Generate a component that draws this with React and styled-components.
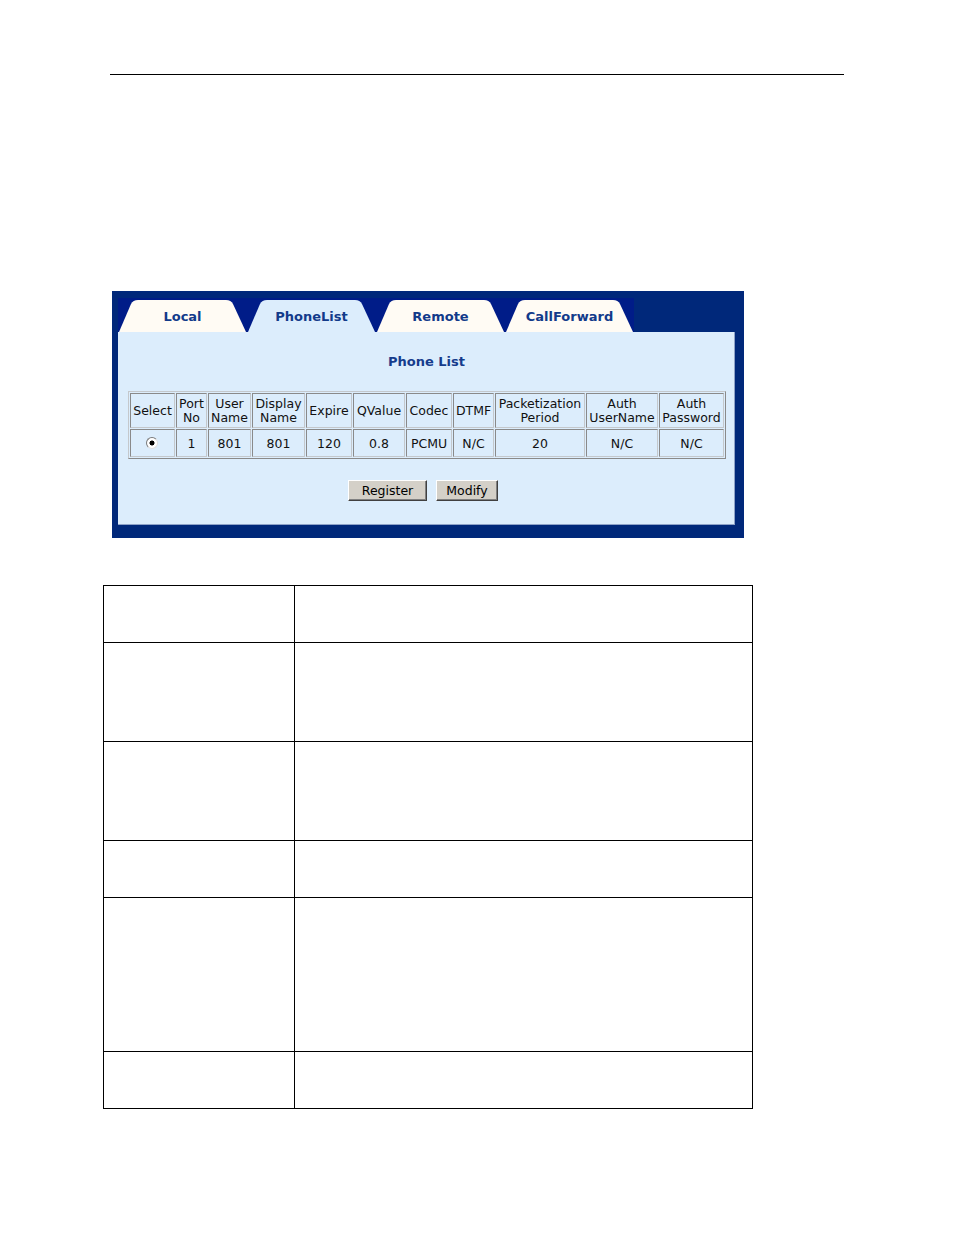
import React from "react";
import styled, { createGlobalStyle } from "styled-components";

const GlobalStyle = createGlobalStyle`
  body {
    margin: 0;
    background: #ffffff;
    font-family: "DejaVu Sans", Verdana, sans-serif;
  }
`;

const tabs = ["Local", "PhoneList", "Remote", "CallForward"];
const active = "PhoneList";

const headers = [
  ["Select"],
  ["Port", "No"],
  ["User", "Name"],
  ["Display", "Name"],
  ["Expire"],
  ["QValue"],
  ["Codec"],
  ["DTMF"],
  ["Packetization", "Period"],
  ["Auth", "UserName"],
  ["Auth", "Password"],
];
const widths = [45, 31, 43, 53, 46, 52, 46, 41, 90, 72, 65];
const row = [null, "1", "801", "801", "120", "0.8", "PCMU", "N/C", "20", "N/C", "N/C"];

const docRows = [57, 99, 99, 57, 154, 57];

const App = () => {
  return (
    <>
      <GlobalStyle />
      <Page>
        <Rule />
        <Frame>
          <TabStrip>
            {tabs.map((t) => (
              <Tab key={t} $active={t === active}>
                {t}
              </Tab>
            ))}
          </TabStrip>
          <Panel>
            <Title>Phone List</Title>
            <ListTable>
              <colgroup>
                {widths.map((w, i) => (
                  <col key={i} style={{ width: w }} />
                ))}
              </colgroup>
              <thead>
                <tr>
                  {headers.map((h, i) => (
                    <HeadCell key={i}>
                      {h.map((line, j) => (
                        <div key={j}>{line}</div>
                      ))}
                    </HeadCell>
                  ))}
                </tr>
              </thead>
              <tbody>
                <tr>
                  {row.map((v, i) => (
                    <Cell key={i}>{v === null ? <Radio /> : v}</Cell>
                  ))}
                </tr>
              </tbody>
            </ListTable>
            <Buttons>
              <Button $w={79}>Register</Button>
              <Button $w={62}>Modify</Button>
            </Buttons>
          </Panel>
        </Frame>
        <DocTable>
          <tbody>
            {docRows.map((h, i) => (
              <tr key={i} style={{ height: h }}>
                <DocCell $first />
                <DocCell />
              </tr>
            ))}
          </tbody>
        </DocTable>
      </Page>
    </>
  );
};

export default App;

const Page = styled.div`
  padding-top: 74px;
  padding-bottom: 127px;
`;

const Rule = styled.div`
  margin-left: 110px;
  width: 734px;
  height: 1px;
  background: #000;
`;

const Frame = styled.div`
  margin: 216px 0 0 112px;
  width: 617px;
  padding: 7px 9px 13px 6px;
  background: #00287a;
`;

const TabStrip = styled.div`
  display: flex;
  width: 516px;
  height: 34px;
  align-items: flex-end;
  background: #001c88;
`;

const Tab = styled.div`
  width: 129px;
  height: 32px;
  display: flex;
  align-items: center;
  justify-content: center;
  font-size: 13px;
  font-weight: bold;
  color: #123a8a;
  background: ${({ $active }) => ($active ? "#dcedfc" : "#fffbf4")};
  clip-path: path("M1 32 L13 4 Q15 0 20 0 L108 0 Q113 0 115 4 L128 32 Z");
`;

const Panel = styled.div`
  box-sizing: border-box;
  height: 193px;
  padding: 21px 9px 0 10px;
  background: #dcedfc;
  border-right: 1px solid #8ea2c8;
  border-bottom: 1px solid #8ea2c8;
  display: flex;
  flex-direction: column;
  align-items: flex-start;
`;

const Title = styled.div`
  align-self: stretch;
  height: 18px;
  line-height: 18px;
  text-align: center;
  font-size: 13px;
  font-weight: bold;
  color: #163c8c;
  margin-bottom: 20px;
`;

const ListTable = styled.table`
  width: 598px;
  table-layout: fixed;
  border-collapse: separate;
  border-spacing: 1px;
  border: 1px solid;
  border-color: #c4c8cc #8a8a8a #8a8a8a #c4c8cc;
  font-size: 12.5px;
  color: #111;
`;

const HeadCell = styled.th`
  height: 33px;
  padding: 0;
  font-weight: normal;
  text-align: center;
  vertical-align: middle;
  line-height: 14px;
  white-space: nowrap;
  border: 1px solid;
  border-color: #8a8a8a #c4c8cc #c4c8cc #8a8a8a;
`;

const Cell = styled.td`
  height: 26px;
  padding: 0;
  text-align: center;
  vertical-align: middle;
  white-space: nowrap;
  border: 1px solid;
  border-color: #8a8a8a #c4c8cc #c4c8cc #8a8a8a;
`;

const Radio = styled.span`
  display: inline-block;
  box-sizing: border-box;
  width: 12px;
  height: 12px;
  margin-left: -2px;
  vertical-align: -1px;
  border-radius: 50%;
  border: 1px solid;
  border-color: #7a7a7a #e0e0e0 #e0e0e0 #7a7a7a;
  background: radial-gradient(circle, #000 0 2.2px, #fff 2.8px);
`;

const Buttons = styled.div`
  align-self: stretch;
  display: flex;
  justify-content: center;
  gap: 9px;
  margin-top: 21px;
  padding-right: 7px;
`;

const Button = styled.button`
  box-sizing: border-box;
  width: ${({ $w }) => $w}px;
  height: 21px;
  padding: 0;
  font-family: "DejaVu Sans", Verdana, sans-serif;
  font-size: 12.5px;
  color: #000;
  background: #d4d0c8;
  border: 1px solid;
  border-color: #ffffff #404040 #404040 #ffffff;
  box-shadow: inset -1px -1px 0 #808080;
`;

const DocTable = styled.table`
  margin: 47px 0 0 103px;
  width: 650px;
  border-collapse: collapse;
`;

const DocCell = styled.td`
  width: ${({ $first }) => ($first ? "190px" : "auto")};
  border: 1px solid #000;
  padding: 0;
`;
